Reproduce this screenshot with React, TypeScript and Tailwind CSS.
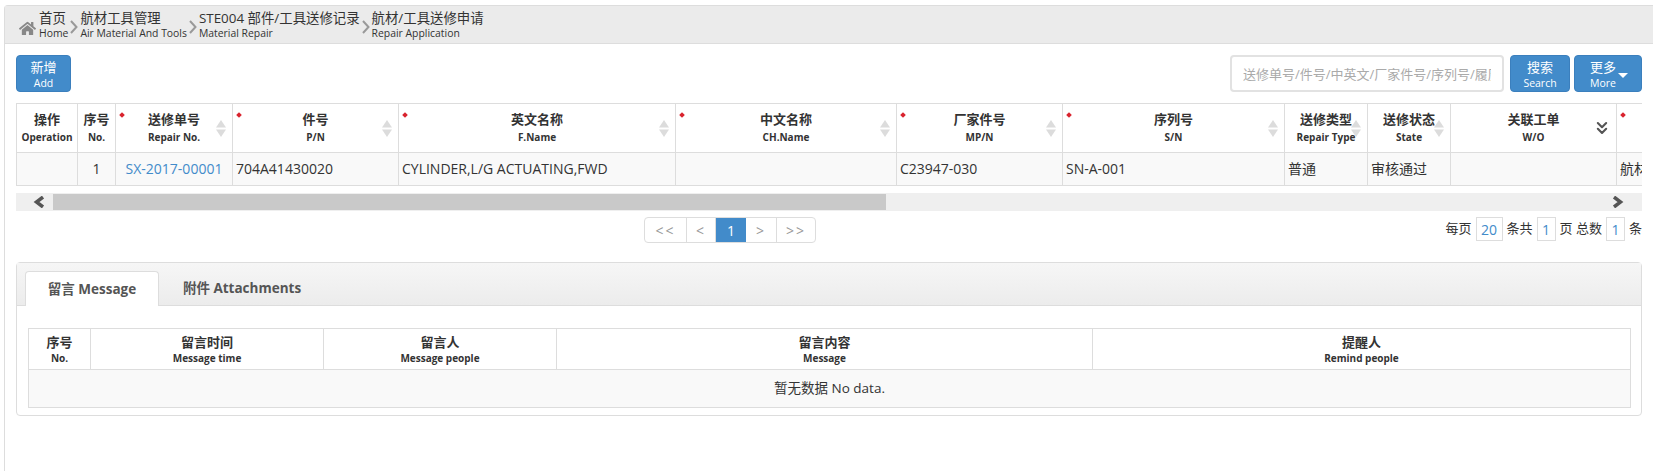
import React from "react";
import { ChevronsDown } from "lucide-react";
import { FaHome } from "react-icons/fa";

const columns = [
  { cn: "操作", en: "Operation", w: "w-[61px]" },
  { cn: "序号", en: "No.", w: "w-[38px]" },
  { cn: "送修单号", en: "Repair No.", w: "w-[117px]", req: true, sort: true },
  { cn: "件号", en: "P/N", w: "w-[166px]", req: true, sort: true },
  { cn: "英文名称", en: "F.Name", w: "w-[277px]", req: true, sort: true },
  { cn: "中文名称", en: "CH.Name", w: "w-[221px]", req: true, sort: true },
  { cn: "厂家件号", en: "MP/N", w: "w-[166px]", req: true, sort: true },
  { cn: "序列号", en: "S/N", w: "w-[222px]", req: true, sort: true },
  { cn: "送修类型", en: "Repair Type", w: "w-[83px]", sort: true },
  { cn: "送修状态", en: "State", w: "w-[83px]", sort: true },
  { cn: "关联工单", en: "W/O", w: "w-[166px]", more: true },
  { cn: "", en: "", w: "w-[200px]", req: true },
];

const messageColumns = [
  { cn: "序号", en: "No.", w: "w-[62px]" },
  { cn: "留言时间", en: "Message time", w: "w-[233px]" },
  { cn: "留言人", en: "Message people", w: "w-[233px]" },
  { cn: "留言内容", en: "Message", w: "w-[536px]" },
  { cn: "提醒人", en: "Remind people", w: "w-[538px]" },
];

const crumbs = [
  { cn: "航材工具管理", en: "Air Material And Tools" },
  { cn: "STE004 部件/工具送修记录", en: "Material Repair" },
  { cn: "航材/工具送修申请", en: "Repair Application" },
];

const cell = "border border-[#ddd] pb-[2px]";

const Crumb = ({ cn, en }: { cn: string; en: string }) => (
  <div className="flex flex-col">
    <span className="text-[13.4px] leading-[16px] text-[#333]">{cn}</span>
    <span className="text-[10.4px] leading-[14px] text-[#333]">{en}</span>
  </div>
);

const CrumbArrow = () => (
  <svg width="8" height="14" viewBox="0 0 8 14" className="mx-[2px] mt-[10px] shrink-0">
    <path d="M1 1l5.5 6L1 13" fill="none" stroke="#999" strokeWidth="2" />
  </svg>
);

const SortArrows = () => (
  <svg width="10" height="17" viewBox="0 0 10 17" className="absolute right-[6px] top-[16px]">
    <path d="M5 0l5 7.5H0z" fill="#dcdcdc" />
    <path d="M5 17l5-7.5H0z" fill="#dcdcdc" />
  </svg>
);

const BlueButton = ({ cn, en, w, caret }: { cn: string; en: string; w: string; caret?: boolean }) => (
  <button
    className={`relative flex h-[37px] ${w} flex-col items-center justify-center rounded-[4px] border border-[#3b7fbd] bg-[#428bca] pt-[2px] text-white`}
  >
    <span className={`text-[13px] leading-[17px] ${caret ? "-ml-[10px]" : ""}`}>{cn}</span>
    <span className={`text-[10.5px] leading-[15px] ${caret ? "-ml-[10px]" : ""}`}>{en}</span>
    {caret && (
      <span className="absolute right-[13px] top-[17px] h-0 w-0 border-x-[5px] border-t-[5px] border-x-transparent border-t-white" />
    )}
  </button>
);

const PageBox = ({ w, children, className = "" }: { w: string; children: React.ReactNode; className?: string }) => (
  <span
    className={`flex h-full ${w} items-center justify-center border-r border-[#ddd] text-[14px] tracking-[2px] text-[#999] last:border-r-0 ${className}`}
  >
    {children}
  </span>
);

const CountBox = ({ w, children }: { w: string; children: React.ReactNode }) => (
  <span className={`mx-[4px] flex h-[24px] ${w} items-center justify-center border border-[#ddd] text-[14px] text-[#428bca]`}>
    {children}
  </span>
);

export default function App() {
  return (
    <div className="h-[471px] w-[1653px] overflow-hidden bg-white pt-[5px] pl-[4px] font-['Open_Sans','Noto_Sans_CJK_SC',sans-serif] text-[#333]">
      <div className="h-[466px] rounded-tl-[4px] border-t border-l border-[#ddd]">
        {/* breadcrumb */}
        <div className="flex h-[38px] items-start border-b border-[#ddd] bg-[#ebebeb] pt-[4px] pl-[14px]">
          <FaHome size={17} className="mt-[10px] mr-[3px] shrink-0 text-[#888]" />
          <Crumb cn="首页" en="Home" />
          <CrumbArrow />
          {crumbs.map((c, i) => (
            <React.Fragment key={c.en}>
              <Crumb cn={c.cn} en={c.en} />
              {i < crumbs.length - 1 && <CrumbArrow />}
            </React.Fragment>
          ))}
        </div>

        <div className="w-[1637px] pt-[11px] pl-[11px]">
          {/* toolbar */}
          <div className="flex items-start">
            <BlueButton cn="新增" en="Add" w="w-[55px]" />
            <div className="ml-auto flex">
              <input
                readOnly
                placeholder="送修单号/件号/中英文/厂家件号/序列号/履历号"
                className="mr-[6px] h-[37px] w-[274px] rounded-[4px] border-2 border-[#e2e2e2] px-[11px] text-[13px] outline-none placeholder:text-[#aaa]"
              />
              <div className="mr-[4px]">
                <BlueButton cn="搜索" en="Search" w="w-[60px]" />
              </div>
              <BlueButton cn="更多" en="More" w="w-[68px]" caret />
            </div>
          </div>

          {/* main table */}
          <div className="mt-[11px] w-[1626px] overflow-hidden">
            <table className="w-[1800px] table-fixed border-collapse">
              <thead>
                <tr className="h-[49px]">
                  {columns.map((c, i) => (
                    <th key={i} className={`relative ${c.w} border border-[#ddd] bg-white p-0 pb-[2px] text-center font-bold`}>
                      {c.req && (
                        <span className="absolute top-[9px] left-[4px] h-[4px] w-[4px] rotate-45 bg-[#d9232e]" />
                      )}
                      <div className="text-[13px] leading-[20px] text-[#333]">{c.cn}</div>
                      <div className="text-[10px] leading-[17px] text-[#333]">{c.en}</div>
                      {c.sort && <SortArrows />}
                      {c.more && (
                        <ChevronsDown size={20} strokeWidth={2.5} className="absolute top-[14px] right-[4px] text-[#555]" />
                      )}
                    </th>
                  ))}
                </tr>
              </thead>
              <tbody>
                <tr className="h-[33px] bg-[#f9f9f9] text-[14px]">
                  <td className={cell} />
                  <td className={`${cell} text-center`}>1</td>
                  <td className={`${cell} text-center text-[#428bca]`}>SX-2017-00001</td>
                  <td className={`${cell} pl-[3px]`}>704A41430020</td>
                  <td className={`${cell} pl-[3px]`}>CYLINDER,L/G ACTUATING,FWD</td>
                  <td className={cell} />
                  <td className={`${cell} pl-[3px]`}>C23947-030</td>
                  <td className={`${cell} pl-[3px]`}>SN-A-001</td>
                  <td className={`${cell} pl-[3px]`}>普通</td>
                  <td className={`${cell} pl-[3px]`}>审核通过</td>
                  <td className={cell} />
                  <td className={`${cell} pl-[3px]`}>航材工具</td>
                </tr>
              </tbody>
            </table>
          </div>

          {/* horizontal scroll bar */}
          <div className="mt-[7px] flex h-[18px] w-[1626px] items-center bg-[#efefef]">
            <div className="flex w-[37px] justify-center pl-[9px]">
              <svg width="12" height="12" viewBox="0 0 12 12">
                <path d="M10 1L3.5 6l6.5 5" fill="none" stroke="#555" strokeWidth="3.5" />
              </svg>
            </div>
            <div className="h-[16px] w-[833px] bg-[#c9c9c9]" />
            <div className="ml-auto pr-[18px]">
              <svg width="12" height="12" viewBox="0 0 12 12">
                <path d="M2 1l6.5 5L2 11" fill="none" stroke="#555" strokeWidth="3.5" />
              </svg>
            </div>
          </div>

          {/* pagination */}
          <div className="mt-[6px] flex h-[26px] w-[1626px] items-start">
            <div className="ml-[628px] flex h-[26px] overflow-hidden rounded-[4px] border border-[#ddd]">
              <PageBox w="w-[42px]">{"<<"}</PageBox>
              <PageBox w="w-[29px]">{"<"}</PageBox>
              <PageBox w="w-[30px]" className="border-r-0 bg-[#428bca] !tracking-normal !text-white">
                1
              </PageBox>
              <PageBox w="w-[31px]">{">"}</PageBox>
              <PageBox w="w-[38px]">{">>"}</PageBox>
            </div>
            <div className="ml-auto flex h-[24px] items-center text-[13px] whitespace-nowrap text-[#333]">
              每页
              <CountBox w="w-[27px]">20</CountBox>
              条共
              <CountBox w="w-[19px]">1</CountBox>
              页 总数
              <CountBox w="w-[19px]">1</CountBox>条
            </div>
          </div>

          {/* message panel */}
          <div className="mt-[19px] h-[154px] w-[1626px] rounded-[4px] border border-[#ddd]">
            <div className="flex h-[43px] items-end border-b border-[#ddd] bg-gradient-to-b from-[#f6f6f6] to-[#ececec] px-[8px]">
              <div className="-mb-px flex h-[35px] w-[134px] items-center justify-center rounded-t-[4px] border border-b-0 border-[#ddd] bg-white text-[13.5px] font-bold text-[#555]">
                留言 Message
              </div>
              <div className="flex h-[34px] w-[166px] items-center justify-center text-[13.5px] font-bold text-[#555]">
                附件 Attachments
              </div>
            </div>
            <div className="px-[11px] pt-[22px]">
              <table className="w-[1602px] table-fixed border-collapse">
                <thead>
                  <tr className="h-[41px]">
                    {messageColumns.map((c) => (
                      <th key={c.en} className={`${c.w} border border-[#ddd] p-0 pt-[1px] text-center font-bold`}>
                        <div className="text-[13px] leading-[17px] text-[#333]">{c.cn}</div>
                        <div className="text-[10px] leading-[15px] text-[#333]">{c.en}</div>
                      </th>
                    ))}
                  </tr>
                </thead>
                <tbody>
                  <tr className="h-[38px] bg-[#f9f9f9]">
                    <td colSpan={5} className="border border-[#ddd] text-center text-[13.5px]">
                      暂无数据 No data.
                    </td>
                  </tr>
                </tbody>
              </table>
            </div>
          </div>
        </div>
      </div>
    </div>
  );
}
